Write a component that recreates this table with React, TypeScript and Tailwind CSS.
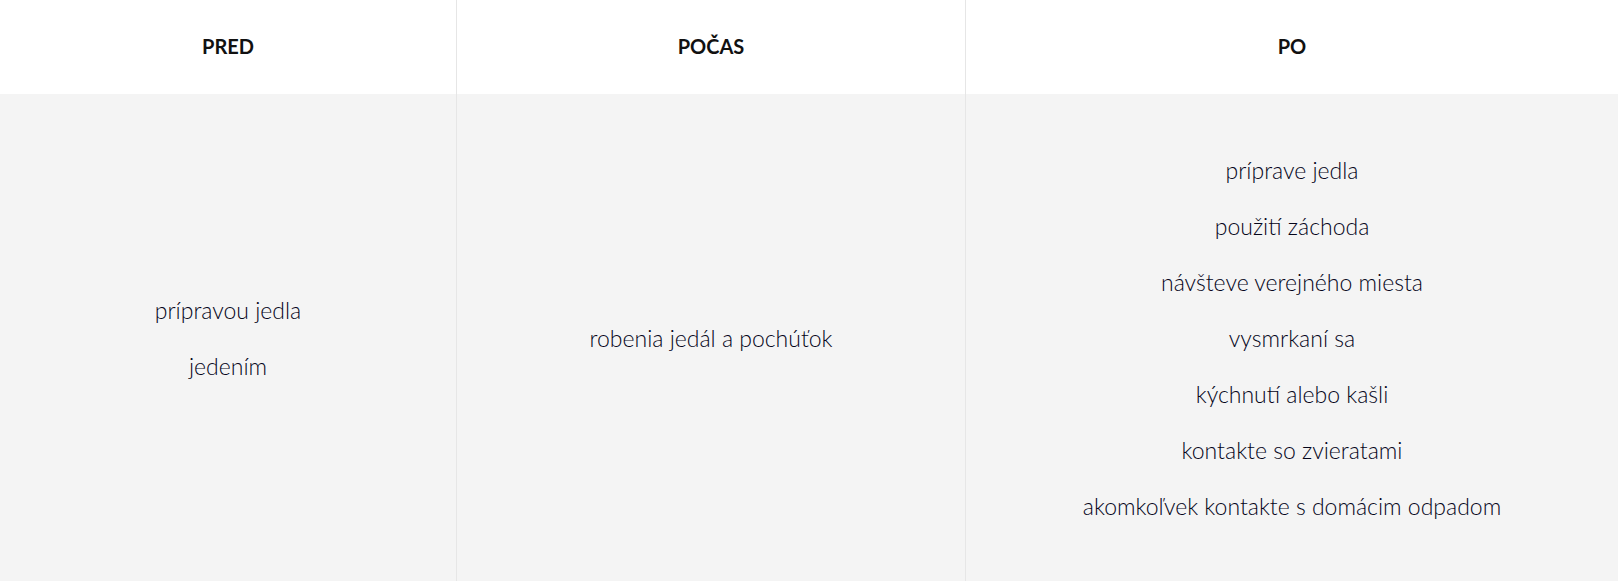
import React from 'react';

const columns = [
  {
    title: 'PRED',
    width: 'w-[456px]',
    items: ['prípravou jedla', 'jedením'],
  },
  {
    title: 'POČAS',
    width: 'w-[509px]',
    items: ['robenia jedál a pochúťok'],
  },
  {
    title: 'PO',
    width: 'flex-1',
    items: [
      'príprave jedla',
      'použití záchoda',
      'návšteve verejného miesta',
      'vysmrkaní sa',
      'kýchnutí alebo kašli',
      'kontakte so zvieratami',
      'akomkoľvek kontakte s domácim odpadom',
    ],
  },
];

export default function App() {
  return (
    <div className="w-full h-[581px] flex bg-white font-['Lato','Noto_Sans',sans-serif] overflow-hidden">
      {columns.map((col, i) => (
        <div
          key={col.title}
          className={`${col.width} flex flex-col ${i > 0 ? 'border-l border-[#e6e6e6]' : ''}`}
        >
          <div className="h-[94px] shrink-0 flex items-center justify-center bg-white">
            <h3 className="text-[20px] font-bold text-[#111111] pb-[2px]">{col.title}</h3>
          </div>
          <div className="flex-1 flex flex-col items-center justify-center bg-[#f4f4f4]">
            {col.items.map((item) => (
              <p key={item} className="text-[23px] font-light leading-7 py-[14px] text-[#05051a] text-center">
                {item}
              </p>
            ))}
          </div>
        </div>
      ))}
    </div>
  );
}
